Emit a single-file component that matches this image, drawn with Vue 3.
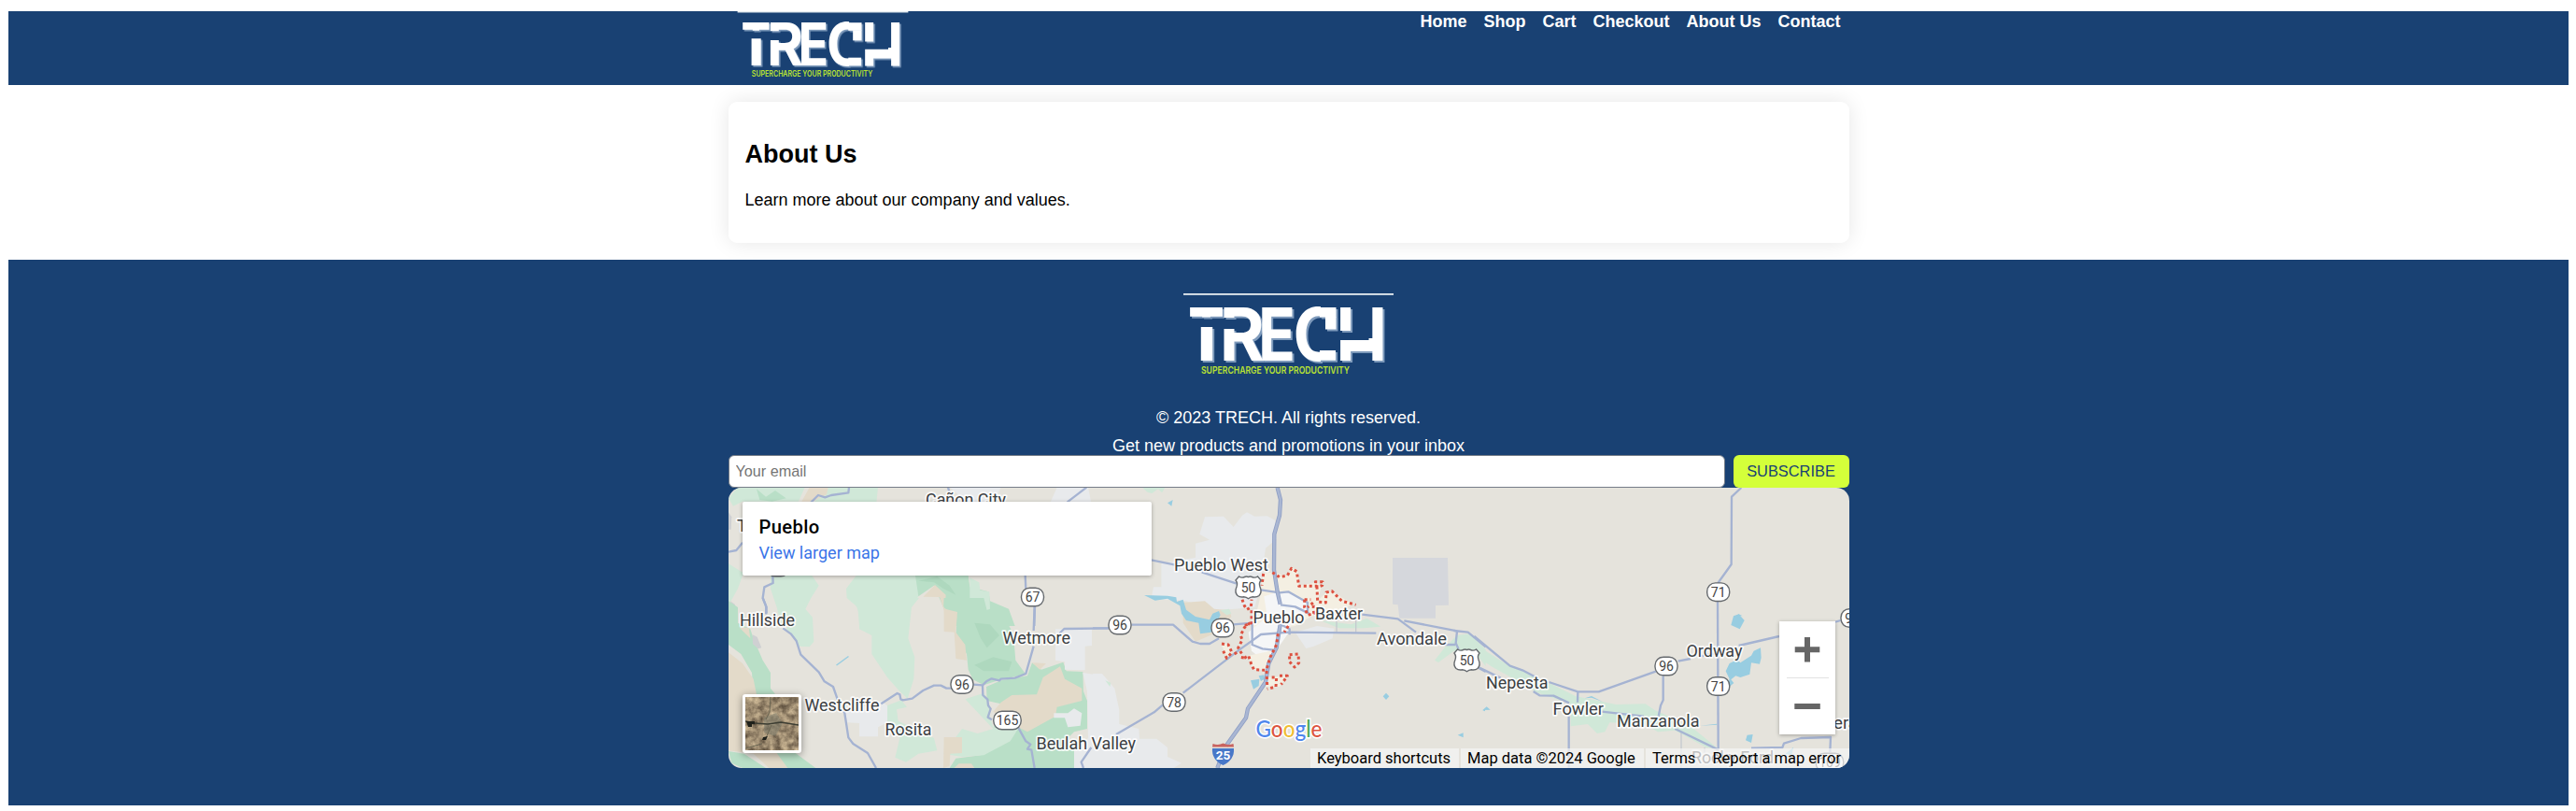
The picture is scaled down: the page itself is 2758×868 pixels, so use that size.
<script setup>
const nav = ['Home', 'Shop', 'Cart', 'Checkout', 'About Us', 'Contact']

// Terrain polygons and roads are grouped by tile; each tile is drawn at 3 units per pixel.
const tiles = [
  {
    at: 'translate(770 470) scale(.33333)',
    areas: [
      ['light', '60,155 275,155 255,200 75,200 45,215 30,190'],
      ['light', '350,155 510,155 505,205 300,205 330,180'],
      ['mid', '120,160 150,185 180,165 215,190 170,200 130,195'],
      ['tan', '290,155 350,155 345,178 300,200 265,200'],
      ['grey', '30,235 40,250 38,290 30,290'],
      ['urban', '740,155 905,155 880,205 800,205'],
      ['urban', '1085,155 1185,155 1195,205 1063,205'],
      ['light', '165,438 298,438 320,470 295,510 275,550 300,600 200,600 185,540 165,480'],
      ['light', '440,438 640,438 640,505 615,540 610,600 450,600 445,540 410,510 408,480'],
      ['mid', '630,438 800,438 805,475 865,490 870,520 930,545 950,600 740,600 720,540 690,470 640,505'],
      ['dark', '640,455 700,440 740,470 760,500 720,480 690,460'],
      ['light', '805,445 835,460 838,485 868,490 870,545 825,560 805,520'],
      ['tan', '655,506 693,468 728,500 725,540 765,555 760,600 725,600 722,545 708,507'],
      ['light', '30,400 78,430 60,480 35,525 30,525'],
      ['grey', '36,520 50,530 60,560 60,580 45,560'],
      ['mid', '30,530 50,545 60,580 60,600 30,600']
    ],
    roads: [
      '417,155 415,172 360,180 340,187 318,180 295,203', '735,155 742,178', '1180,155 1118,202',
      '30,362 55,357 75,332', '172,440 173,462 145,475 140,510 150,535 152,560',
      '983,438 985,480', '1014,535 1012,600'
    ]
  },
  {
    at: 'translate(770 640) scale(.33333)',
    areas: [
      ['light', '190,0 278,0 272,30 300,62 304,140 290,157 255,155 240,125 215,100 240,60'],
      ['light', '430,0 642,0 618,30 607,130 628,190 625,260 605,323 580,300 540,255 490,180 490,120 450,100 450,50'],
      ['mid', '30,10 60,30 60,80 100,100 110,130 140,200 165,240 165,290 180,308 110,310 105,240 70,180 30,150'],
      ['tan', '30,175 75,210 110,260 120,310 200,310 215,500 235,546 160,546 110,500 30,490'],
      ['grey', '107,118 122,125 136,160 125,163 108,148'],
      ['tan', '65,95 95,95 100,130 80,110'],
      ['mid', '30,492 80,500 150,546 75,546 40,530'],
      ['mid', '185,498 245,498 310,546 220,546'],
      ['mid', '722,0 850,0 860,40 920,70 945,115 952,200 985,245 905,262 850,280 815,262 800,230 795,180 760,120 765,60 720,30'],
      ['dark', '820,80 870,85 900,120 860,160 840,130'],
      ['dark', '820,215 880,190 940,205 930,235 850,235'],
      ['tan', '708,0 725,35 765,45 760,110 790,150 795,200 760,195 755,110 722,108 722,35'],
      ['mid', '858,285 905,265 990,250 1005,208 1035,230 1105,206 1115,235 1168,237 1170,300 1182,330 1182,420 1140,430 1110,460 1140,490 1140,546 740,546 760,515 840,505 900,430 880,420 905,340 860,330'],
      ['light', '790,325 850,305 870,345 870,380 880,415 960,420 935,460 850,505 780,510 720,500 780,420 830,435 880,420'],
      ['tan', '1005,208 1050,210 1030,230'],
      ['tan', '905,335 940,312 1020,310 1040,255 1095,220 1110,260 1165,290 1165,330 1085,350 1080,380 990,430 930,400 880,365'],
      ['tan', '722,447 780,447 780,498 742,500 740,540 720,546'],
      ['tan', '755,546 770,532 810,532 820,546'],
      ['urban', '1080,100 1197,100 1197,153 1175,155 1175,232 1110,230 1110,205 1080,200'],
      ['urban', '1168,240 1230,250 1260,290 1260,546 1140,546 1140,490 1185,450 1182,300'],
      ['urban', '1075,370 1120,370 1140,355 1165,370 1160,410 1120,415 1110,385 1075,385'],
      ['urban', '405,370 520,330 545,350 540,400 510,415 510,445 450,445 450,402 412,400'],
      ['light', '540,345 585,328 603,350 570,358 575,395 690,450 700,490 640,500 600,527 565,512 580,450 540,395']
    ],
    roads: [
      '140,0 152,30 150,52', '205,97 230,115 248,138 262,182 320,238 338,268 366,285 380,325 403,370 415,448 430,468 477,498 504,546',
      '520,340 572,306 580,310 583,325 590,328 620,323 655,297 690,281 712,281 730,290 745,290',
      '817,278 846,280 858,268 875,259 900,265 905,260 950,257 985,243 1010,155', '1013,25 1010,105',
      '1093,114 1108,99 1260,97', '846,280 847,312 862,326 864,345 872,356 863,383 876,391',
      '960,415 985,460 1000,470 990,485 1003,488 1013,546', '1195,480 1163,527 1170,546'
    ]
  },
  {
    at: 'translate(1170 510) scale(.33333)',
    areas: [
      ['light', '160,36 232,36 222,52 210,40 190,54 175,50'],
      ['urban', '360,130 420,128 452,162 480,125 495,115 520,128 560,127 585,140 590,200 555,230 545,300 540,350 520,420 400,430 330,410 300,400 220,394 190,380 195,355 220,355 220,280 330,260 330,215 375,203 343,185'],
      ['tan', '290,405 360,400 390,425 440,430 445,450 400,500 330,530 290,470'],
      ['water', '165,381 240,383 268,388 270,402 290,395 300,428 330,450 375,460 385,440 405,432 410,445 380,500 345,505 340,470 300,462 285,440 280,415 240,392 200,398'],
      ['light', '410,430 438,425 445,440 430,445'],
      ['water', '257,75 240,85 253,95'],
      ['cream', '548,310 578,308 625,320 640,292 658,305 662,350 720,340 735,350 722,400 750,372 770,370 835,410 790,430 700,450 650,480 510,500 535,400'],
      ['city', '550,385 590,372 625,372 690,405 690,440 640,450 630,500 560,600 510,560 500,500 560,450'],
      ['cream', '500,575 570,560 560,620 515,620'],
      ['light', '730,462 830,475 880,455 925,482 870,487 790,487'],
      ['military', '963,261 1140,261 1143,413 1101,414 1101,455 985,455 980,412 963,410']
    ],
    roads: [
      '188,268 265,284', '350,307 462,344', '540,364 600,373 628,370 690,405 690,440', '603,412 650,418 695,440',
      '865,443 980,457 1038,500', '1000,463 1170,496'
    ],
    highways: ['593,36 603,75 600,125 583,185 582,300 593,370 602,410'],
    borders: [
      '577,308 600,323 625,318 638,295 655,305 662,352 720,352 715,338 738,338 737,350 720,355 722,402 748,405 750,372 768,368 800,400 845,412',
      '548,312 543,350', '480,395 487,415 495,427 508,420 510,395', '510,430 510,470 484,480',
      '680,395 680,420 690,445 710,440 708,405 690,420', '680,395 700,395'
    ]
  },
  {
    at: 'translate(1170 660) scale(.33333)',
    areas: [
      ['urban', '0,183 30,183 70,230 85,300 85,345 148,360 150,392 205,392 240,420 240,450 285,470 260,486 0,486'],
      ['light', '40,205 58,212 55,225'],
      ['light', '1098,140 1130,100 1170,60 1210,55 1262,105 1262,160 1240,130 1160,110 1110,147'],
      ['urban', '650,50 720,30 775,38 770,70 710,95 685,102'],
      ['water', '507,205 535,200 533,222 516,233'], ['water', '533,190 550,187 552,200 540,207'],
      ['water', '942,245 952,256 942,267 932,256'], ['water', '1172,380 1190,373 1190,388'], ['water', '1252,301 1260,296 1260,304'],
      ['cream', '555,225 565,195 625,190 600,225'], ['cream', '412,87 435,90 447,115 430,130']
    ],
    roads: [
      '0,37 50,37', '125,26 258,26 320,80 345,87 375,87 405,70', '75,378 197,307 225,283',
      '290,245 470,107 540,57 630,50 910,53', '452,25 515,20', '603,25 632,40 632,58', '512,20 512,90 545,103 580,107',
      '1160,45 1205,50 1262,97', '1170,47 1166,85 1175,105', '1130,90 1165,90', '1240,165 1262,177'
    ],
    thin: ['845,0 845,50', '783,0 783,50'],
    highways: ['602,25 590,100 565,150 555,210 498,295 492,325 428,415', '408,465 400,486'],
    borders: [
      '505,20 487,35 475,60 480,75 467,100 482,125 480,137 500,125 510,155 518,170 555,172',
      '628,30 615,50', '595,55 590,90 570,130 558,170 560,220', '414,87 435,90 447,115 430,133 418,108',
      '455,120 470,110', '632,122 660,120 662,148 648,162 632,145 632,122', '575,195 590,195 588,225 560,232',
      '600,190 625,190 605,218'
    ]
  },
  {
    at: 'translate(1580 650) scale(.33333)',
    areas: [
      ['light', '0,120 110,190 150,205 230,240 320,285 450,312 545,310 575,330 620,350 700,390 780,455 740,450 640,395 585,400 540,375 430,370 415,400 390,405 360,375 305,382 305,310 200,275 150,245 50,190 0,155'],
      ['water', '845,22 863,42 848,70 820,57 828,28'],
      ['water', '893,140 915,130 917,162 912,182 885,178 880,215 850,225 835,220 820,232 829,243 815,255 805,250 815,230 803,205 815,180 840,168 850,178 885,155'],
      ['water', '872,410 890,408 885,435 867,427'], ['water', '22,330 35,319 47,329'],
      ['water', '350,292 372,285 407,303 372,290'], ['water', '995,470 1020,450 1015,475'], ['water', '720,380 775,374 775,377'],
      ['water', '838,26 845,22 857,28']
    ],
    roads: [
      '853,-384 822,-355 821,-138 778,-78', '777,-20 779,455', '-5,93 110,188 150,202 200,228', '235,240 328,271 395,271 580,205',
      '10,193 80,227', '185,270 205,283 250,284 300,307', '328,271 327,305', '299,350 299,515', '405,335 540,350',
      '640,390 780,458', '602,220 602,298 594,315 587,350', '650,173 690,165', '720,158 780,145', '845,123 975,93', '1155,47 1172,42',
      '885,452 985,450 990,437 1045,420 1140,417 1138,465'
    ],
    thin: ['660,400 660,515', '735,450 735,470']
  }
]

const labels = [
  ['Cañon City', 991, 541, 86], ['T', 789, 569, 11], ['Hillside', 792, 670.3, 59], ['Wetmore', 1073.5, 689, 72.5],
  ['Westcliffe', 861.5, 760.7, 80], ['Rosita', 947.5, 787, 50], ['Beulah Valley', 1109.5, 802, 106.5],
  ['Pueblo West', 1257, 611, 101], ['Pueblo', 1341.5, 666.7, 55], ['Baxter', 1408, 663, 51], ['Avondale', 1474, 690, 75],
  ['Ordway', 1805.5, 702.7, 60], ['Nepesta', 1591, 737.3, 66.5], ['Fowler', 1662.5, 764.7, 54.5],
  ['Manzanola', 1731, 778.3, 88.5], ['Rocky Ford', 1811, 817, 88], ['era', 1963, 780, 26]
]

const ovals = [
  ['67', 1105.5, 639], ['96', 1030, 732.5], ['165', 1078.5, 771], ['96', 1199, 669], ['96', 1309, 672], ['78', 1257, 751.5],
  ['71', 1839.7, 633.7], ['96', 1784, 713], ['71', 1839.7, 734.5], ['96', 1983, 661.5], ['109', 1959, 816], ['69', 833, 607]
]
const usRoutes = [[1336.5, 629], [1570.5, 707]]
</script>

<template>
  <div class="page">
    <header class="topbar">
      <div class="inner">
        <svg class="logo-small" viewBox="0 0 225 97" role="img">
          <defs>
            <clipPath id="clip-bar"><rect x="0" y="10" width="60" height="15.5" /></clipPath>
            <clipPath id="clip-stem"><rect x="0" y="36" width="60" height="45" /></clipPath>
            <clipPath id="clip-r"><path d="M30 10H90V80H30V38H56V26H30Z" /></clipPath>
            <clipPath id="clip-c"><rect x="110" y="10" width="37" height="66" /></clipPath>
            <clipPath id="clip-h"><path d="M160 10H180V40H160ZM160 50H198.500V10H216V72H160Z" /></clipPath>
            <symbol id="trech" viewBox="0 0 225 97">
              <rect class="logo-rule" width="225" height="1.8" />
              <g class="wordmark">
                <g clip-path="url(#clip-bar)"><text x="5" y="71.7" textLength="39" lengthAdjust="spacingAndGlyphs">T</text></g>
                <g clip-path="url(#clip-stem)"><text x="-2.5" y="71.7" textLength="55" lengthAdjust="spacingAndGlyphs">T</text></g>
                <g clip-path="url(#clip-r)"><text x="38.7" y="71.7" textLength="48" lengthAdjust="spacingAndGlyphs">R</text></g>
                <text x="80" y="71.7" textLength="40" lengthAdjust="spacingAndGlyphs">E</text>
                <g clip-path="url(#clip-c)"><text x="117.5" y="71.7" textLength="52" lengthAdjust="spacingAndGlyphs">C</text></g>
                <rect x="146" y="15" width="17.5" height="10.5" />
                <rect x="152" y="25" width="11.5" height="13.5" />
                <rect x="146" y="61" width="17" height="10.7" />
                <g clip-path="url(#clip-h)"><text class="tall" x="164" y="97" textLength="55" lengthAdjust="spacingAndGlyphs" transform="translate(-.8 0)">H</text></g>
              </g>
              <text class="tagline" x="19" y="86" textLength="159" lengthAdjust="spacingAndGlyphs">SUPERCHARGE YOUR PRODUCTIVITY</text>
            </symbol>
          </defs>
          <use href="#trech" width="225" height="97" />
        </svg>
        <nav>
          <a v-for="n in nav" :key="n">{{ n }}</a>
        </nav>
      </div>
    </header>

    <main class="card">
      <h2>About Us</h2>
      <p>Learn more about our company and values.</p>
    </main>

    <footer>
      <svg class="logo-large" viewBox="0 0 225 97"><use href="#trech" width="225" height="97" /></svg>
      <p class="copy">© 2023 TRECH. All rights reserved.</p>
      <p class="promo">Get new products and promotions in your inbox</p>
      <form class="subscribe" @submit.prevent>
        <input type="email" placeholder="Your email" />
        <button type="submit">SUBSCRIBE</button>
      </form>
      <div class="map">
        <svg class="canvas" viewBox="780 522 1200 300">
          <g v-for="(t, i) in tiles" :key="'a' + i" :transform="t.at">
            <polygon v-for="(a, j) in t.areas" :key="j" :class="a[0]" :points="a[1]" />
          </g>
          <path class="stream" d="M908.5 702.5L895.5 712" />
          <g v-for="(t, i) in tiles" :key="'r' + i" :transform="t.at">
            <polyline v-for="r in t.thin" :key="r" class="thin" :points="r" />
            <polyline v-for="r in t.roads" :key="r" class="road" :points="r" />
            <polyline v-for="r in t.highways" :key="r" class="highway" :points="r" />
            <polyline v-for="r in t.highways" :key="'c' + r" class="highway-core" :points="r" />
          </g>
          <g v-for="(t, i) in tiles" :key="'b' + i" :transform="t.at">
            <polyline v-for="r in t.borders" :key="r" class="border" :points="r" />
          </g>
          <g v-for="(o, i) in ovals" :key="'o' + i" class="oval">
            <rect :x="o[1] - (o[0].length > 2 ? 14.7 : 12)" :y="o[2] - 9.8" :width="o[0].length > 2 ? 29.4 : 24" height="19.6" rx="9" />
            <text :x="o[1]" :y="o[2] + 5">{{ o[0] }}</text>
          </g>
          <g v-for="(u, i) in usRoutes" :key="'u' + i" class="us" :transform="`translate(${u[0]} ${u[1]})`">
            <path d="M-10-12Q-7-10-4-11.500Q-2-12.500 0-11.500Q2-12.500 4-11.500Q7-10 10-12L13.500-8Q11-5 12.500-1Q15 5 11.500 8.500Q9 10.500 5 9.800Q2 10 0 11.700Q-2 10-5 9.800Q-9 10.500-11.500 8.500Q-15 5-12.500-1Q-11-5-13.500-8Z" />
            <text y="5">50</text>
          </g>
          <g class="interstate" transform="translate(1309.500 806)">
            <path class="crown" d="M-11-10Q-5-8 0-10.500Q5-8 11-10L11.500-6.500H-11.500Z" />
            <path class="body" d="M-11.500-5H11.500Q12.500 7 0 13Q-12.500 7-11.500-5Z" />
            <text y="6.500">25</text>
          </g>
          <g class="labels">
            <text v-for="l in labels" :key="l[0] + l[1]" :x="l[1]" :y="l[2]" :textLength="l[3]" lengthAdjust="spacingAndGlyphs">{{ l[0] }}</text>
          </g>
          <text class="google" x="1344.500" y="789.300" textLength="71" lengthAdjust="spacingAndGlyphs"><tspan class="gb">G</tspan><tspan class="gr">o</tspan><tspan class="gy">o</tspan><tspan class="gb">g</tspan><tspan class="gg">l</tspan><tspan class="gr">e</tspan></text>
        </svg>

        <section class="place">
          <strong>Pueblo</strong>
          <a>View larger map</a>
        </section>

        <div class="satellite">
          <svg viewBox="0 0 57 57">
            <defs>
              <filter id="ground" x="0" y="0" width="1" height="1" color-interpolation-filters="sRGB">
                <feTurbulence type="fractalNoise" baseFrequency=".13" numOctaves="4" seed="8" />
                <feColorMatrix values=".7 0 0 0 .26  .66 0 0 0 .21  .55 0 0 0 .16  0 0 0 0 1" />
              </filter>
            </defs>
            <rect width="57" height="57" filter="url(#ground)" />
            <path class="haze" d="M20 22L33 17L40 28L32 42L20 38Z" />
            <path class="river" d="M0 26L10 28L24 29L38 27L57 30" />
            <path class="creek" d="M27 0L26 16L22 24M28 30L22 44M0 55L18 50" />
            <path class="patch" d="M1 26H10V29H7V32H3ZM19 43L24 42L22 46H18Z" />
          </svg>
        </div>

        <div class="zoom">
          <svg viewBox="0 0 60 121">
            <path d="M27 17h6v10.200h10.300v6H33v10.300h-6V33.200H16.700v-6H27zM16.300 88h27.500v6H16.300z" />
            <path class="sep" d="M8 60h45v1H8z" />
          </svg>
        </div>

        <div class="attribution">
          <span class="keys">Keyboard shortcuts</span>
          <span class="data">Map data ©2024 Google</span>
          <span class="terms"><a>Terms</a><a>Report a map error</a></span>
        </div>
      </div>
    </footer>
  </div>
</template>

<style>
body { background: #fff; }
</style>

<style scoped>
* { box-sizing: border-box; }
.page { padding: 12px 8px 0 9px; height: 868px; font: 18px/20px "Liberation Sans", Arial, sans-serif; color: #000; }
.topbar { height: 79px; background: #194173; }
.inner { width: 1200px; margin: 0 auto; padding: 0 9px; display: flex; justify-content: space-between; align-items: flex-start; }
.logo-small { width: 184px; height: 79px; display: block; }
nav { display: flex; gap: 18px; line-height: 22px; font-weight: 700; color: #fff; }
.card { width: 1200px; height: 151px; margin: 18px auto; padding: 41px 18px 0; border-radius: 9px; background: #fff; box-shadow: 0 0 22px rgba(0, 0, 0, .1); }
h2 { margin: 0 0 23px; font-size: 27px; line-height: 31px; }
p { margin: 0; }
footer { height: 584px; background: #194173; color: #fff; display: flex; flex-direction: column; align-items: center; padding-top: 36px; }
.logo-large { width: 225px; height: 97px; display: block; margin-bottom: 26px; }
.copy { margin-bottom: 10px; }
.promo { height: 20px; }
.subscribe { width: 1200px; height: 35px; display: flex; gap: 9px; }
input { flex: 1; border: 1px solid #767d88; border-radius: 6px; padding: 0 7px; background: #fff; font: 16.2px "Liberation Sans", Arial, sans-serif; outline: 0; }
input::placeholder { color: #757575; }
button { width: 124px; border: 0; border-radius: 6px; padding: 0; background: #d4ff3a; color: #194173; font: 16.4px "Liberation Sans", Arial, sans-serif; }

.wordmark { fill: #fff; font: 700 78px Inter, sans-serif; filter: drop-shadow(2.500px 2.500px 0 #7e9abb); }
.wordmark .tall { font-size: 113px; }
.logo-rule { fill: #e6edf1; }
.tagline { fill: #b9e332; font: 600 10.500px Inter, sans-serif; }

.map { position: relative; width: 1200px; height: 300px; border-radius: 14px; overflow: hidden; background: #e5e3dc; font-family: Roboto, sans-serif; }
.canvas { display: block; width: 1200px; height: 300px; }
.light { fill: #d0e8d8; }
.mid { fill: #b9dfc7; }
.dark { fill: #aed8be; }
.tan { fill: #e3dac9; }
.grey { fill: #cfd0d2; }
.urban { fill: #e8eaec; }
.water { fill: #98cde1; }
.cream { fill: #f4efe2; }
.city { fill: #f5f6f7; }
.military { fill: #d5d7dc; }
.stream { stroke: #98cde1; stroke-width: 1.500; }
.road, .highway, .highway-core, .thin, .border { fill: none; stroke-linejoin: round; }
.road { stroke: #a5b3d2; stroke-width: 7; }
.thin { stroke: #c5c9cf; stroke-width: 4; }
.highway { stroke: #8f9fc4; stroke-width: 13; }
.highway-core { stroke: #a9b6d3; stroke-width: 8; }
.border { stroke: #dd5140; stroke-width: 9; stroke-dasharray: 9 9; }
.oval rect { fill: #fff; stroke: #666a6e; stroke-width: 1.400; }
.oval text, .us text { font-size: 14px; text-anchor: middle; fill: #444; }
.us path { fill: #fff; stroke: #666a6e; stroke-width: 1.400; }
.crown { fill: #c8635f; }
.body { fill: #4878c8; }
.interstate text { fill: #fff; font-size: 13.500px; font-weight: 700; text-anchor: middle; }
.labels text { font-size: 18px; fill: #3c4043; stroke: #fff; stroke-opacity: .85; stroke-width: 3.500px; stroke-linejoin: round; paint-order: stroke; }
.google { font: 500 24px Lato, sans-serif; stroke: #fff; stroke-width: 3px; paint-order: stroke; }
.gb { fill: #4f86ec; }
.gr { fill: #dc5541; }
.gy { fill: #efbd35; }
.gg { fill: #4caa58; }

.place { position: absolute; left: 15px; top: 15px; width: 438px; height: 79px; padding: 15px 18px; border-radius: 2px; background: #fff; box-shadow: 0 1px 4px rgba(0, 0, 0, .3); display: flex; flex-direction: column; }
.place strong { font-size: 20.200px; font-weight: 500; letter-spacing: .35px; line-height: 25px; color: #000; }
.place a { margin-top: 4px; font-size: 18px; line-height: 21px; color: #3a75e8; }
.satellite { position: absolute; left: 15px; top: 221px; width: 63px; height: 63px; border: 3px solid #fff; border-radius: 3px; box-shadow: 0 2px 8px rgba(0, 0, 0, .4); background: #9c8d78; }
.satellite svg { display: block; width: 57px; height: 57px; }
.haze { fill: #7f7f70; opacity: .5; }
.river { fill: none; stroke: #3c3d32; stroke-width: 1.600; }
.creek { fill: none; stroke: #6a6552; stroke-width: 1; }
.patch { fill: #1f211b; }
.zoom { position: absolute; left: 1125px; top: 143px; width: 60px; height: 121px; background: #fff; box-shadow: 0 1px 4px rgba(0, 0, 0, .3); }
.zoom svg { display: block; width: 60px; height: 121px; fill: #666; }
.zoom .sep { fill: #e2e2e2; }
.attribution { position: absolute; right: 0; bottom: 0; height: 21px; display: flex; gap: 2px; color: #000; font-size: 16.500px; line-height: 22px; white-space: nowrap; }
.attribution span { background: rgba(245, 245, 245, .7); padding-left: 7.500px; }
.keys { width: 159px; }
.data { width: 196px; }
.terms { width: 218px; display: flex; gap: 18px; }
</style>
